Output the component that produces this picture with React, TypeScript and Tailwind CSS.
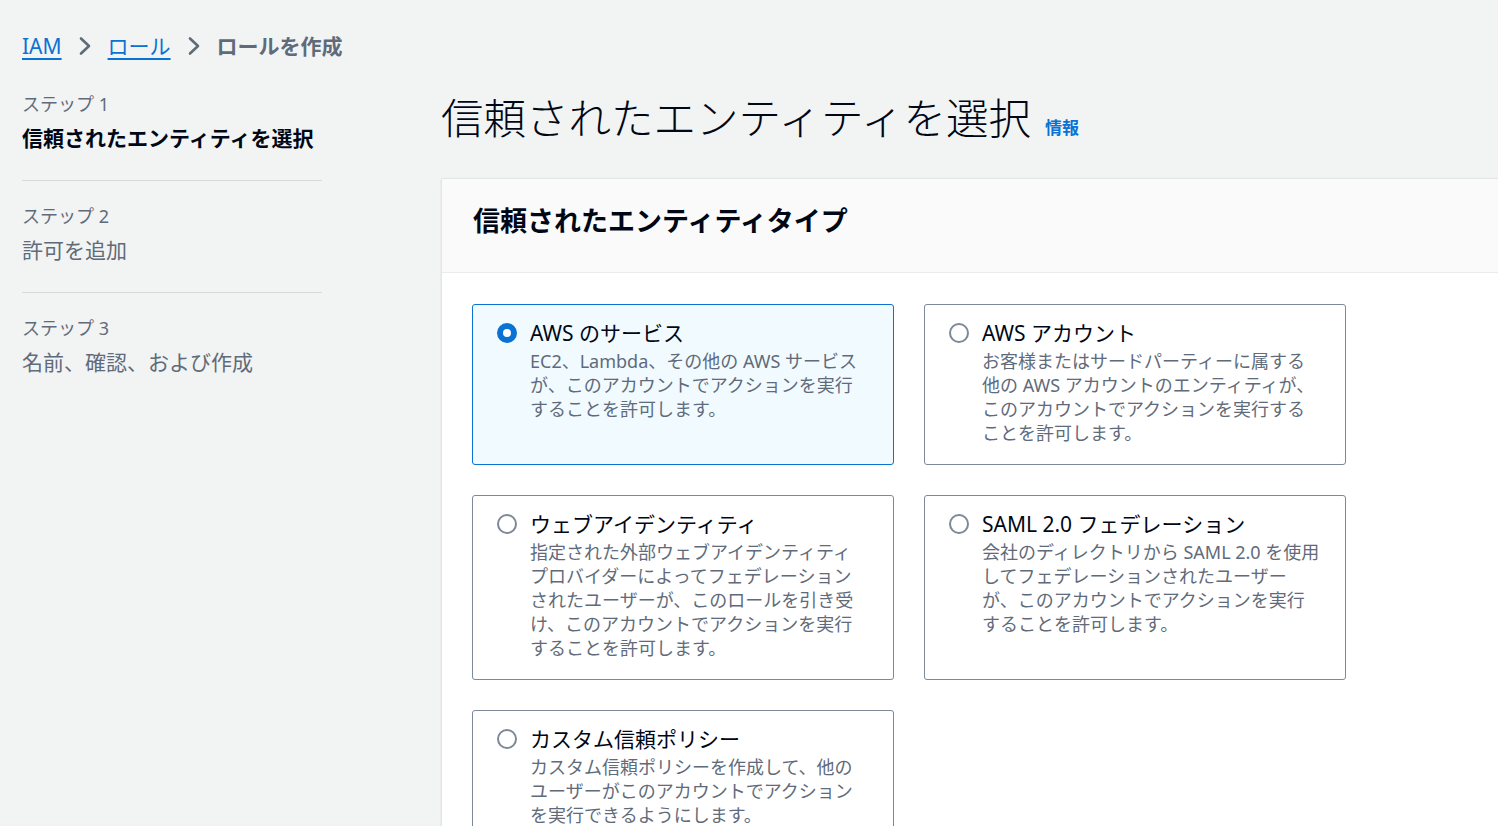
import React from "react";

const FONT = '"Noto Sans", "Noto Sans CJK JP", sans-serif';

function Chevron() {
  return (
    <svg width="14" height="20" viewBox="0 0 14 20" className="mx-[16px] shrink-0">
      <polyline points="3,2.5 11,10 3,17.5" fill="none" stroke="#5f6b7a" strokeWidth="2.6" strokeLinecap="round" strokeLinejoin="round" />
    </svg>
  );
}

type CardProps = { title: string; lines: string[]; selected?: boolean };

function Card({ title, lines, selected }: CardProps) {
  return (
    <div
      className={
        selected
          ? "rounded-[3px] border border-[#0972d3] bg-[#f1faff] pl-[24px] pr-[16px] pt-[14px] pb-[19px]"
          : "rounded-[3px] border border-[#7d8998] bg-white pl-[24px] pr-[16px] pt-[14px] pb-[19px]"
      }
    >
      <div className="flex items-start gap-[13px]">
        <div className="h-[28px] flex items-center shrink-0">
          {selected ? (
            <div className="w-[20px] h-[20px] rounded-full border-[6px] border-[#0972d3] bg-white" />
          ) : (
            <div className="w-[20px] h-[20px] rounded-full border-2 border-[#7d8998] bg-white" />
          )}
        </div>
        <div className="min-w-0">
          <div className="text-[21px] leading-[28px] text-[#000716] whitespace-nowrap">{title}</div>
          <div className="mt-[2px] text-[18px] leading-[24px] text-[#5f6b7a]">
            {lines.map((l, i) => (
              <div key={i} className="whitespace-nowrap">{l}</div>
            ))}
          </div>
        </div>
      </div>
    </div>
  );
}

export default function App() {
  return (
    <div className="w-[1498px] h-[826px] overflow-hidden bg-[#f2f3f3]" style={{ fontFamily: FONT }}>
      {/* Breadcrumb */}
      <div className="pl-[22px] pt-[30px] h-[62px] flex items-center text-[21px] leading-[32px]">
        <a className="text-[#0972d3] underline underline-offset-[4px] decoration-[1.5px]">IAM</a>
        <Chevron />
        <a className="text-[#0972d3] underline underline-offset-[4px] decoration-[1.5px]">ロール</a>
        <Chevron />
        <span className="text-[#5f6b7a] font-bold">ロールを作成</span>
      </div>

      <div className="flex">
        {/* Left nav */}
        <nav className="ml-[22px] w-[300px] shrink-0 pt-[30px]">
          <div className="pb-[27px] border-b border-[#d5dbdb]">
            <div className="text-[18px] leading-[24px] text-[#5f6b7a]">ステップ 1</div>
            <div className="mt-[7px] text-[21px] leading-[30px] font-bold text-[#000716] whitespace-nowrap">信頼されたエンティティを選択</div>
          </div>
          <div className="pt-[23px] pb-[27px] border-b border-[#d5dbdb]">
            <div className="text-[18px] leading-[24px] text-[#5f6b7a]">ステップ 2</div>
            <div className="mt-[7px] text-[21px] leading-[30px] text-[#5f6b7a]">許可を追加</div>
          </div>
          <div className="pt-[23px]">
            <div className="text-[18px] leading-[24px] text-[#5f6b7a]">ステップ 3</div>
            <div className="mt-[7px] text-[21px] leading-[30px] text-[#5f6b7a]">名前、確認、および作成</div>
          </div>
        </nav>

        {/* Main */}
        <main className="ml-[119px] flex-1 min-w-0">
          <div className="mt-[28px] flex items-baseline h-[56px]">
            <h1 className="text-[42.5px] leading-[56px] text-[#000716] font-light whitespace-nowrap">信頼されたエンティティを選択</h1>
            <a className="ml-[14px] text-[17px] font-bold text-[#0972d3]">情報</a>
          </div>

          <section className="mt-[32px] border-t border-l border-[#e3e6e8] shadow-[0_1px_2px_rgba(0,7,22,0.12)] bg-white rounded-tl-[2px]">
            <div className="bg-[#fafafa] border-b border-[#e9ebed] pl-[31px] pt-[24px] pb-[33px]">
              <h2 className="text-[27px] leading-[36px] font-bold text-[#000716] whitespace-nowrap">信頼されたエンティティタイプ</h2>
            </div>
            <div className="pl-[30px] pt-[31px] pb-[40px]">
              <div className="grid grid-cols-[422px_422px] gap-[30px]">
                <Card
                  selected
                  title="AWS のサービス"
                  lines={[
                    "EC2、Lambda、その他の AWS サービス",
                    "が、このアカウントでアクションを実行",
                    "することを許可します。",
                  ]}
                />
                <Card
                  title="AWS アカウント"
                  lines={[
                    "お客様またはサードパーティーに属する",
                    "他の AWS アカウントのエンティティが、",
                    "このアカウントでアクションを実行する",
                    "ことを許可します。",
                  ]}
                />
                <Card
                  title="ウェブアイデンティティ"
                  lines={[
                    "指定された外部ウェブアイデンティティ",
                    "プロバイダーによってフェデレーション",
                    "されたユーザーが、このロールを引き受",
                    "け、このアカウントでアクションを実行",
                    "することを許可します。",
                  ]}
                />
                <Card
                  title="SAML 2.0 フェデレーション"
                  lines={[
                    "会社のディレクトリから SAML 2.0 を使用",
                    "してフェデレーションされたユーザー",
                    "が、このアカウントでアクションを実行",
                    "することを許可します。",
                  ]}
                />
                <Card
                  title="カスタム信頼ポリシー"
                  lines={[
                    "カスタム信頼ポリシーを作成して、他の",
                    "ユーザーがこのアカウントでアクション",
                    "を実行できるようにします。",
                  ]}
                />
              </div>
            </div>
          </section>
        </main>
      </div>
    </div>
  );
}
